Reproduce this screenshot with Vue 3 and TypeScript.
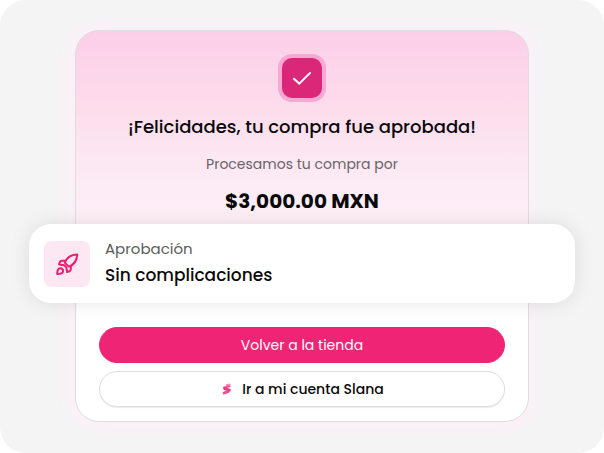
<script setup lang="ts">
const amount = '$3,000.00 MXN'
</script>

<template>
  <main class="stage">
    <section class="card">
      <div class="badge">
        <svg width="24" height="24" viewBox="0 0 24 24" fill="none" stroke="#fff" stroke-width="2" aria-hidden="true">
          <path d="M3.4 12.2 9.2 17.6 20.6 6.4" />
        </svg>
      </div>
      <h1 class="title">¡Felicidades, tu compra fue aprobada!</h1>
      <p class="lead">Procesamos tu compra por</p>
      <p class="amount">{{ amount }}</p>

      <aside class="banner">
        <div class="tile">
          <svg width="24" height="24" viewBox="0 0 24 24" fill="none" stroke="#ec1c70" stroke-width="2" stroke-linejoin="round" aria-hidden="true">
            <path d="M9.8 10.6C11.6 5.8 15.8 2.6 22.2 2.4C22 8.6 19 12.8 13.8 14.6Z" />
            <path d="M10 8.8H6.8C5.8 8.8 5.2 9.2 4.8 10.2L4.1 12.4L9.2 13.2L11.4 15.4L12.1 20L14.4 19.3C15.4 18.9 15.8 18.3 15.8 17.3V13.8" />
            <path d="M2.2 22C2.2 18.6 2.8 16.2 5.2 16.2C6.9 16.2 8.1 17.4 8.1 19C8.1 21.4 5.6 22 2.2 22Z" />
          </svg>
        </div>
        <div>
          <p class="kicker">Aprobación</p>
          <h2 class="headline">Sin complicaciones</h2>
        </div>
      </aside>

      <div class="actions">
        <button class="button primary" type="button">Volver a la tienda</button>
        <button class="button secondary" type="button">
          <svg width="12" height="12" viewBox="0 0 12 12" fill="none" stroke-linecap="round" aria-hidden="true">
            <path d="M7 2 9.6 1.4" stroke="#f78db8" stroke-width="2" />
            <path d="M4.2 4.6 9.4 3.2" stroke="#f25c9c" stroke-width="2.4" />
            <path d="M4.6 5.6 9.4 7.2" stroke="#ea3c86" stroke-width="2.8" />
            <path d="M4 10 8 8.6" stroke="#f04a90" stroke-width="2.8" />
          </svg>
          Ir a mi cuenta Slana
        </button>
      </div>
    </section>
  </main>
</template>

<style>
body {
  background: #fff;
}
</style>

<style scoped>
.stage {
  box-sizing: border-box;
  min-height: 100vh;
  padding: 30px 75px 31px;
  border-radius: 26px;
  background: #f4f4f4;
  font-family: Poppins, Inter, "Liberation Sans", sans-serif;
  color: #0a0a0a;
}

.card {
  display: flex;
  flex-direction: column;
  align-items: center;
  padding: 23px 23px 14px;
  border: 1px solid #dedede;
  border-radius: 24px;
  background: linear-gradient(#fbcfe8, #fddcec 20%, #fce7f3 32%, #fef0f7 50%, #fff 70%);
  box-shadow: 0 0 12px 8px #fbf1f7;
}

h1,
h2,
p {
  margin: 0;
}

.badge {
  display: grid;
  place-items: center;
  width: 40px;
  height: 40px;
  border: 4px solid #f9a8d4;
  border-radius: 14px;
  background: #db2777;
}

.title {
  margin-top: 11px;
  font-size: 18px;
  font-weight: 500;
  line-height: 28px;
  text-align: center;
}

.lead {
  margin-top: 12px;
  color: #6b6468;
  font-size: 14px;
  line-height: 22px;
}

.amount {
  margin-top: 12px;
  font-size: 20px;
  font-weight: 700;
  line-height: 28px;
}

.banner {
  box-sizing: border-box;
  display: flex;
  align-items: center;
  align-self: stretch;
  gap: 15px;
  margin: 9px -70px 0;
  padding: 12px 15px;
  border-radius: 22px;
  background: #fff;
  box-shadow: 0 0 20px rgb(0 0 0 / 10%);
}

.tile {
  display: grid;
  place-items: center;
  width: 46px;
  height: 46px;
  border-radius: 7px;
  background: #fce7f3;
}

.kicker {
  color: #5c5c5c;
  font-size: 15px;
  line-height: 26px;
}

.headline {
  padding-bottom: 2px;
  font-size: 17px;
  font-weight: 500;
  line-height: 27px;
}

.actions {
  display: grid;
  align-self: stretch;
  gap: 8px;
  margin-top: 24px;
}

.button {
  display: flex;
  align-items: center;
  justify-content: center;
  gap: 10px;
  height: 36px;
  padding: 0 16px;
  border: 1px solid #dedede;
  border-radius: 18px;
  background: #fff;
  color: #0a0a0a;
  font: 500 14px/20px Poppins, Inter, "Liberation Sans", sans-serif;
}

.primary {
  border-color: #f02475;
  background: #f02475;
  color: #fff;
  font-weight: 400;
}

.secondary {
  box-shadow: 0 1px 1px rgb(0 0 0 / 8%);
}
</style>
